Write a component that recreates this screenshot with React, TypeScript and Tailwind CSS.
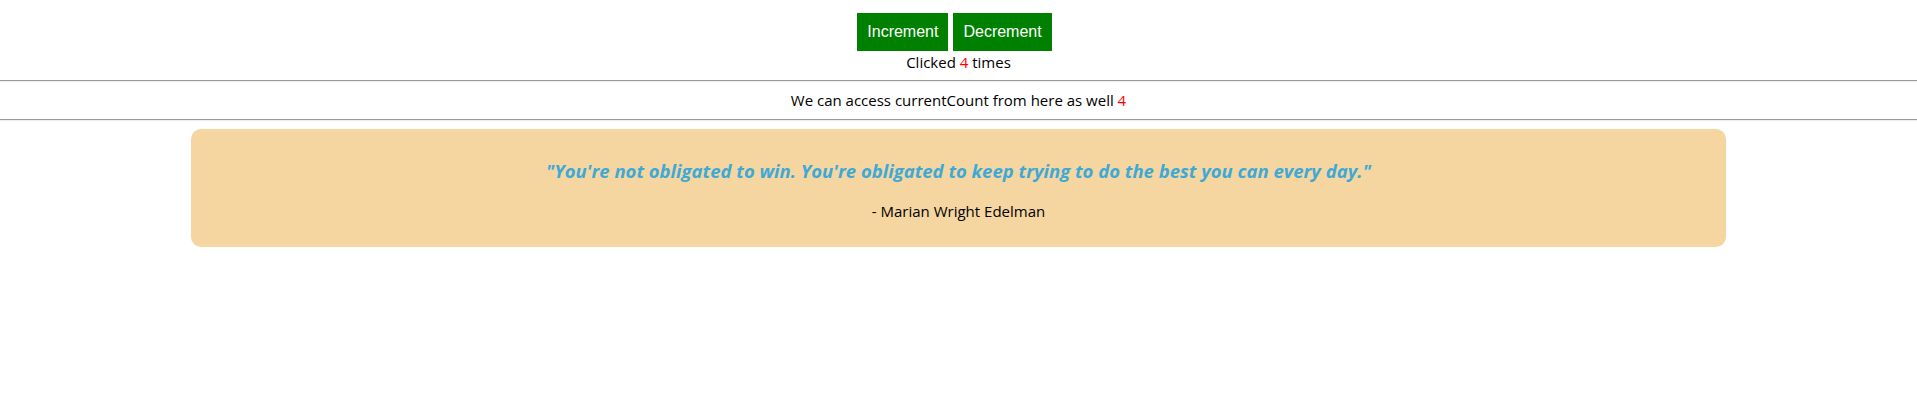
import React, { useState } from "react";

function Counter({ count, onInc, onDec }: { count: number; onInc: () => void; onDec: () => void }) {
  return (
    <div className="flex flex-col items-center pt-[13px]">
      <div className="mr-[8px] flex gap-[5px]">
        <button
          className="bg-[#008000] px-[10px] py-[10px] text-[16px] leading-[18px] text-white font-['Liberation_Sans',Arial,sans-serif]"
          onClick={onInc}
        >
          Increment
        </button>
        <button
          className="bg-[#008000] px-[10px] py-[10px] text-[16px] leading-[18px] text-white font-['Liberation_Sans',Arial,sans-serif]"
          onClick={onDec}
        >
          Decrement
        </button>
      </div>
      <p className="leading-[22px]">
        Clicked <span className="text-[#ff0000]">{count}</span> times
      </p>
    </div>
  );
}

function Divider() {
  return <hr className="h-[2px] border-t border-b border-t-[#9a9a9a] border-b-[#eeeeee]" />;
}

export default function App() {
  const [count, setCount] = useState(4);

  return (
    <div className="min-h-screen bg-white text-[15px] text-black font-['Open_Sans','Noto_Sans',sans-serif]">
      <Counter count={count} onInc={() => setCount(count + 1)} onDec={() => setCount(count - 1)} />
      <div className="mt-[7px]">
        <Divider />
      </div>
      <p className="my-[8px] text-center leading-[21px]">
        We can access currentCount from here as well <span className="text-[#ff0000]">{count}</span>
      </p>
      <Divider />
      <div className="mx-auto mt-[8px] w-[1535px] rounded-[10px] bg-[#f6d6a0] pt-[29px] pb-[25px] text-center">
        <p className="text-[18.5px] font-bold italic leading-[25px] text-[#3ea9d6]">
          "You're not obligated to win. You're obligated to keep trying to do the best you can every day."
        </p>
        <p className="mt-[18px] leading-[21px]">- Marian Wright Edelman</p>
      </div>
    </div>
  );
}
